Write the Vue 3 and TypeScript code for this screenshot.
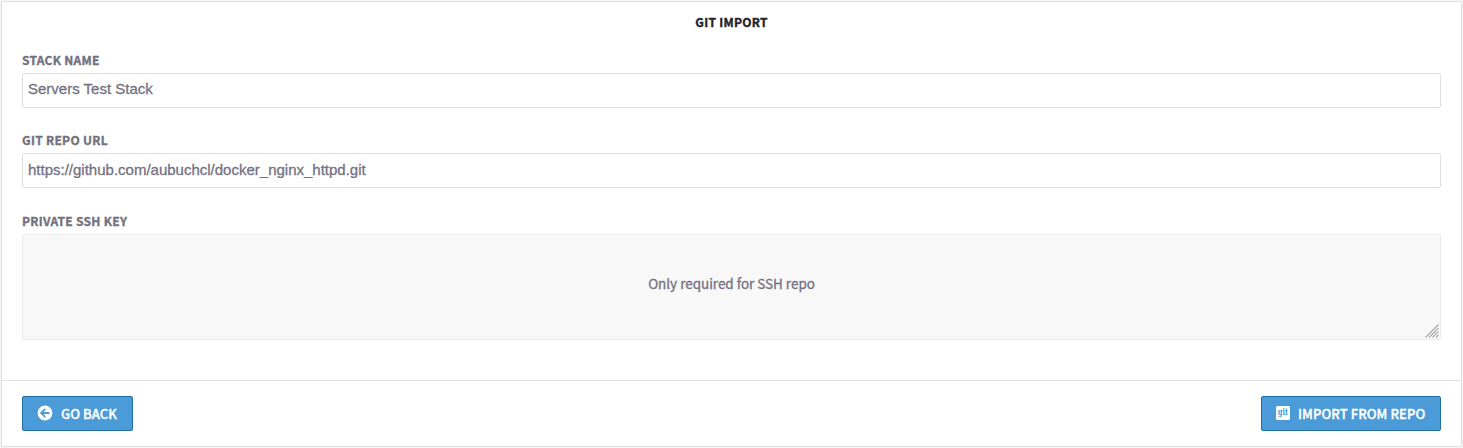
<script setup lang="ts">
import { ref } from 'vue'

const stackName = ref<string>('Servers Test Stack')
const repoUrl = ref<string>('https://github.com/aubuchcl/docker_nginx_httpd.git')
</script>

<template>
  <main class="page">
    <section class="card">
      <h1 class="title"><span>GIT IMPORT</span></h1>
      <div class="fields">
        <div class="field">
          <label class="label" for="stack">STACK NAME</label>
          <input id="stack" v-model="stackName" class="input" type="text" spellcheck="false" />
        </div>
        <div class="field second">
          <label class="label" for="repo">GIT REPO URL</label>
          <input id="repo" v-model="repoUrl" class="input url" type="text" spellcheck="false" />
        </div>
        <div class="field">
          <span class="label">PRIVATE SSH KEY</span>
          <div class="keybox">
            <span class="hint">Only required for SSH repo</span>
            <svg class="grip" width="14" height="14" viewBox="0 0 14 14">
              <path d="M0.5 13.5 13.5 0.5M4 13.5 13.5 4M7.5 13.5 13.5 7.5M11 13.5 13.5 11" stroke="#a9a9a9" stroke-width="1.1" fill="none" />
            </svg>
          </div>
        </div>
      </div>
      <footer class="footer">
        <button class="btn back" type="button">
          <svg width="16" height="16" viewBox="0 0 16 16">
            <circle cx="8" cy="8" r="7.4" fill="#fff" />
            <path d="M12.4 8H4.5M8.3 3.8 4.1 8l4.2 4.2" fill="none" stroke="#4a9bd7" stroke-width="1.8" />
          </svg>
          <span>GO BACK</span>
        </button>
        <button class="btn import" type="button">
          <svg class="giticon" width="14" height="14" viewBox="0 0 14 14">
            <rect width="14" height="14" rx="1.6" fill="#fff" />
            <text x="7" y="9.4" text-anchor="middle" textLength="10.4" lengthAdjust="spacingAndGlyphs" class="git">git</text>
          </svg>
          <span>IMPORT FROM REPO</span>
        </button>
      </footer>
    </section>
  </main>
</template>

<style>
body {
  background: #f5f5f5;
}
</style>

<style scoped>
* {
  box-sizing: border-box;
}
.page {
  height: 448px;
  padding: 1px;
  font-family: "Noto Sans CJK SC", "Noto Sans", sans-serif;
  overflow: hidden;
}
.card {
  height: 446px;
  display: flex;
  flex-direction: column;
  background: #fff;
  border: 1px solid #dfdfdf;
  border-radius: 2px;
}
.title {
  margin: 10px 0 0;
  height: 20px;
  line-height: 20px;
  font-size: 12px;
  letter-spacing: 0.27px;
  font-weight: 700;
  -webkit-text-stroke: 0.35px;
  text-align: center;
  color: #23222c;
}
.fields {
  flex: 1;
  padding: 17px 20px 0;
}
.field {
  display: flex;
  flex-direction: column;
  align-items: flex-start;
  margin-bottom: 22px;
}
.second {
  margin-bottom: 23px;
}
.label {
  height: 20px;
  line-height: 20px;
  margin-bottom: 3px;
  font-size: 12px;
  letter-spacing: 0.29px;
  font-weight: 700;
  -webkit-text-stroke: 0.35px;
  color: #73717f;
  white-space: nowrap;
}
.fields > .field:first-child {
  margin-top: 1px;
}
.input {
  width: 100%;
  height: 35px;
  margin: 0;
  padding: 0 5px 4px;
  border: 1px solid #dfdfdf;
  border-radius: 2px;
  background: #fff;
  outline: none;
  font: 15px "Liberation Sans", Arial, sans-serif;
  -webkit-text-stroke: 0.3px;
  color: #73717f;
}
.url {
  padding-bottom: 2px;
}
.keybox {
  position: relative;
  width: 100%;
  height: 106px;
  padding-top: 38px;
  border: 1px solid #ebebeb;
  border-radius: 2px;
  background: #f8f8f8;
  text-align: center;
  line-height: 20px;
}
.hint {
  display: block;
  font-size: 13.45px;
  -webkit-text-stroke: 0.3px;
  color: #73717f;
}
.grip {
  position: absolute;
  right: 1px;
  bottom: 1px;
}
.footer {
  height: 66px;
  display: flex;
  justify-content: space-between;
  align-items: flex-start;
  padding: 15px 20px 0;
  border-top: 1px solid #dfdfdf;
}
.btn {
  height: 35px;
  display: flex;
  align-items: center;
  padding: 0 0 1px 14px;
  border: 1px solid #1f6fa9;
  border-radius: 2px;
  background: #4a9bd7;
  color: #fff;
  font: 500 13px/20px "Noto Sans CJK SC", "Noto Sans", sans-serif;
  white-space: nowrap;
}
.btn span {
  padding-top: 2px;
  letter-spacing: 0.07px;
  -webkit-text-stroke: 0.35px;
}
.back {
  width: 111px;
  gap: 8px;
}
.import {
  width: 180px;
  gap: 8px;
}
.giticon {
  overflow: visible;
}
.git {
  font: bold 9px "DejaVu Serif", serif;
  fill: #4a9bd7;
}
</style>
